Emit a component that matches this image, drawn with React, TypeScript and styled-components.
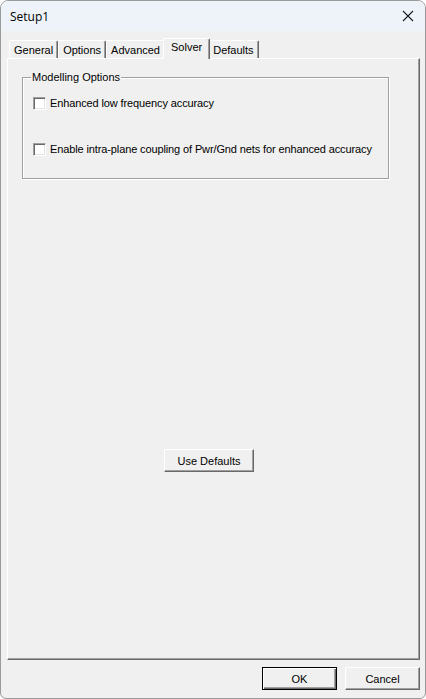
import React from "react"
import styled, { createGlobalStyle } from "styled-components"

const GlobalStyle = createGlobalStyle`
  html, body {
    margin: 0;
    padding: 0;
    background: #ffffff;
  }
  body {
    font-family: "Liberation Sans", Arial, sans-serif;
    font-size: 11px;
    color: #000;
  }
`

const Window = styled.div`
  width: 426px;
  height: 699px;
  box-sizing: border-box;
  border: 1px solid #9a9a9a;
  border-radius: 8px 8px 6px 6px;
  overflow: hidden;
  display: flex;
  flex-direction: column;
  background: #f0f0f0;
`

const TitleBar = styled.div`
  height: 30px;
  flex: none;
  display: flex;
  align-items: center;
  justify-content: space-between;
  padding: 0 10px 0 9px;
  background: #eef3f9;
  font-family: "Open Sans", "Noto Sans", sans-serif;
  font-size: 12px;
`

const CloseButton = styled.div`
  width: 14px;
  height: 14px;
  display: flex;
  align-items: center;
  justify-content: center;
`

const Body = styled.div`
  flex: 1;
  display: flex;
  flex-direction: column;
  padding: 7px 5px 0 6px;
`

const TabStrip = styled.div`
  display: flex;
  align-items: flex-end;
  height: 20px;
  padding-left: 2px;
  position: relative;
  z-index: 1;
`

const Tab = styled.div<{ active?: boolean }>`
  box-sizing: border-box;
  height: ${({ active }) => (active ? "21px" : "18px")};
  margin: ${({ active }) => (active ? "0 -2px -1px -2px" : "0")};
  padding: ${({ active }) => (active ? "2px 7px 0 7px" : "3px 4px 0 4px")};
  background: #f0f0f0;
  border-top: 1px solid #ffffff;
  border-left: 1px solid #ffffff;
  border-right: 1px solid #696969;
  box-shadow: inset -1px 0 0 #a0a0a0;
  border-radius: 2px 2px 0 0;
  position: relative;
  z-index: ${({ active }) => (active ? 2 : 0)};
  white-space: nowrap;
`

const Panel = styled.div`
  flex: 1;
  box-sizing: border-box;
  display: flex;
  flex-direction: column;
  align-items: flex-start;
  border-top: 1px solid #ffffff;
  border-left: 1px solid #ffffff;
  border-right: 1px solid #696969;
  border-bottom: 1px solid #696969;
  box-shadow: inset -1px -1px 0 #a0a0a0;
  padding: 12px 30px 0 14px;
`

const GroupBox = styled.fieldset`
  box-sizing: border-box;
  width: 367px;
  height: 108px;
  margin: 0;
  padding: 12px 0 0 10px;
  border: 1px solid #a0a0a0;
  box-shadow: inset 1px 1px 0 #ffffff, 1px 1px 0 #ffffff;
  display: flex;
  flex-direction: column;
  gap: 30px;
`

const Legend = styled.legend`
  padding: 0 1px;
  margin-left: -2px;
`

const CheckRow = styled.label`
  display: flex;
  align-items: center;
  gap: 4px;
  height: 16px;
  white-space: nowrap;
  letter-spacing: -0.12px;
`

const CheckBox = styled.span`
  box-sizing: border-box;
  width: 13px;
  height: 13px;
  flex: none;
  background: #ffffff;
  border-top: 1px solid #a0a0a0;
  border-left: 1px solid #a0a0a0;
  border-right: 1px solid #ffffff;
  border-bottom: 1px solid #ffffff;
  box-shadow: inset 1px 1px 0 #696969, inset -1px -1px 0 #e3e3e3;
`

const PushButton = styled.button<{ primary?: boolean; width: number }>`
  box-sizing: border-box;
  width: ${({ width }) => width}px;
  height: 23px;
  padding: 0;
  font-family: "Liberation Sans", Arial, sans-serif;
  font-size: 11px;
  color: #000;
  background: #f0f0f0;
  border: 1px solid;
  border-top-color: ${({ primary }) => (primary ? "#000" : "#ffffff")};
  border-left-color: ${({ primary }) => (primary ? "#000" : "#ffffff")};
  border-right-color: ${({ primary }) => (primary ? "#000" : "#696969")};
  border-bottom-color: ${({ primary }) => (primary ? "#000" : "#696969")};
  box-shadow: ${({ primary }) =>
    primary
      ? "inset 1px 1px 0 #ffffff, inset -1px -1px 0 #696969, inset -2px -2px 0 #a0a0a0"
      : "inset -1px -1px 0 #a0a0a0"};
`

const DefaultsButton = styled(PushButton)`
  margin: 270px 0 0 142px;
`

const Footer = styled.div`
  flex: none;
  display: flex;
  justify-content: flex-end;
  gap: 8px;
  padding: 7px 0 8px 0;
`

export default function App() {
  return (
    <>
      <GlobalStyle />
      <Window>
        <TitleBar>
          <span>Setup1</span>
          <CloseButton>
            <svg width="12" height="12" viewBox="0 0 12 12">
              <path d="M1 1 L11 11 M11 1 L1 11" stroke="#1a1a1a" strokeWidth="1.1" />
            </svg>
          </CloseButton>
        </TitleBar>
        <Body>
          <TabStrip>
            <Tab>General</Tab>
            <Tab>Options</Tab>
            <Tab>Advanced</Tab>
            <Tab active>Solver</Tab>
            <Tab>Defaults</Tab>
          </TabStrip>
          <Panel>
            <GroupBox>
              <Legend>Modelling Options</Legend>
              <CheckRow>
                <CheckBox />
                Enhanced low frequency accuracy
              </CheckRow>
              <CheckRow>
                <CheckBox />
                Enable intra-plane coupling of Pwr/Gnd nets for enhanced accuracy
              </CheckRow>
            </GroupBox>
            <DefaultsButton width={90}>Use Defaults</DefaultsButton>
          </Panel>
          <Footer>
            <PushButton primary width={75}>OK</PushButton>
            <PushButton width={75}>Cancel</PushButton>
          </Footer>
        </Body>
      </Window>
    </>
  )
}
